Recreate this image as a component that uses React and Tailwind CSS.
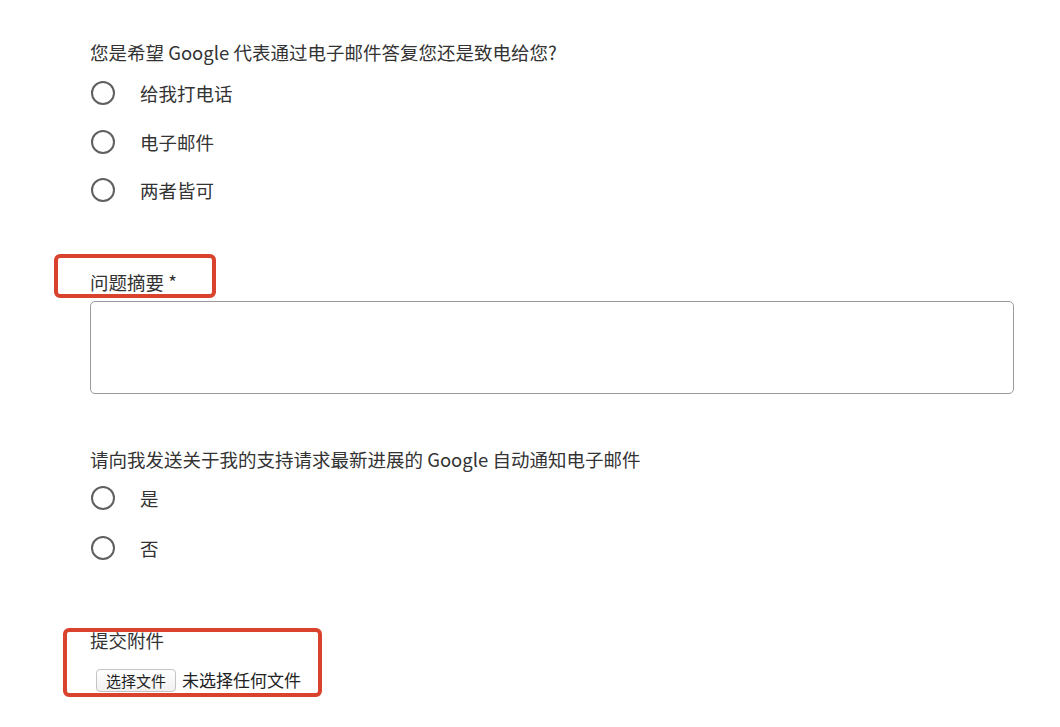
import React from "react";

const font = { fontFamily: '"PingFang SC", "Noto Sans CJK SC", "Noto Sans", sans-serif' };

function Radio({ label, rowClass }) {
  return (
    <div className={`flex items-center ${rowClass}`}>
      <span className="w-[24px] h-[24px] rounded-full border-[2.5px] border-[#606060] box-border ml-[1px] shrink-0" />
      <span className="ml-[25px] text-[18.5px] leading-[24px] text-[#333333]">{label}</span>
    </div>
  );
}

export default function App() {
  return (
    <div className="w-[1060px] h-[727px] bg-white overflow-hidden relative" style={font}>
      <div className="pl-[90px] pt-[40px]">
        <div className="text-[18.5px] leading-[24px] text-[#333333]">
          您是希望 Google 代表通过电子邮件答复您还是致电给您?
        </div>
        <div className="mt-[5px]">
          <Radio label="给我打电话" rowClass="h-[48px]" />
          <Radio label="电子邮件" rowClass="h-[49px]" />
          <Radio label="两者皆可" rowClass="h-[48px]" />
        </div>

        <div className="mt-[56px] relative">
          <div className="text-[18.5px] leading-[24px] text-[#333333]">问题摘要 *</div>
          <div className="absolute left-[-36px] top-[-16px] w-[162px] h-[44px] border-[4px] border-[#d9432d] rounded-[6px]" />
        </div>
        <div className="mt-[7px] w-[924px] h-[93px] border border-[#9a9a9a] rounded-[5px]" />

        <div className="mt-[53px] text-[18.5px] leading-[24px] text-[#333333]">
          请向我发送关于我的支持请求最新进展的 Google 自动通知电子邮件
        </div>
        <div className="mt-[2px]">
          <Radio label="是" rowClass="h-[50px]" />
          <Radio label="否" rowClass="h-[50px]" />
        </div>

        <div className="mt-[55px] relative">
          <div className="text-[18.5px] leading-[24px] text-[#333333]">提交附件</div>
          <div className="mt-[16px] flex items-center">
            <button className="ml-[6px] w-[80px] h-[23px] border border-[#c4c4c4] rounded-[4px] bg-gradient-to-b from-white to-[#f1f1f1] text-[15px] leading-[21px] text-[#222222] flex items-center justify-center">
              选择文件
            </button>
            <span className="ml-[6px] text-[17px] leading-[24px] text-[#222222]">未选择任何文件</span>
          </div>
          <div className="absolute left-[-27px] top-0 w-[259px] h-[69px] border-[4px] border-[#d9432d] rounded-[6px]" />
        </div>
      </div>
    </div>
  );
}
